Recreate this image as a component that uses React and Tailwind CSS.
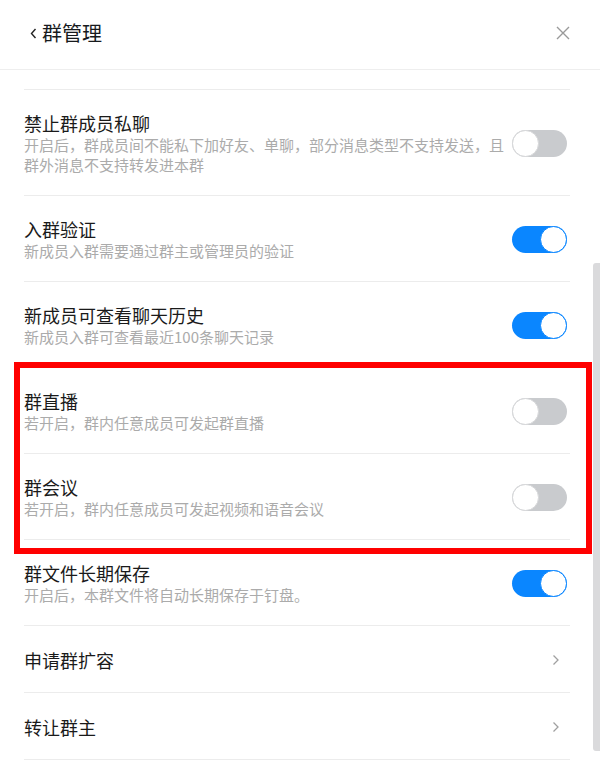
import { useState } from 'react';

const font = { fontFamily: '"Noto Sans CJK SC", "Noto Sans", sans-serif' };

const Toggle = ({ on, onClick }) => (
  <button
    type="button"
    onClick={onClick}
    className={`relative ml-[5px] mr-[3px] h-[27px] w-[55px] shrink-0 rounded-full ${on ? 'bg-[#0a86ff]' : 'bg-[#c9cbce]'}`}
  >
    <span
      className={`absolute top-0 h-[27px] w-[27px] rounded-full bg-white border ${on ? 'right-0 border-[#0a86ff]' : 'left-0 border-[#d6d7d9]'}`}
    ></span>
  </button>
);

const Chevron = () => (
  <svg width="8" height="12" viewBox="0 0 8 12" className="mr-[10px] shrink-0">
    <polyline points="1.5,1.5 6,6 1.5,10.5" fill="none" stroke="#a0a0a0" strokeWidth="1.3" />
  </svg>
);

const SwitchRow = ({ title, desc, on, onClick }) => (
  <div className="flex items-center border-b border-[#ececec] pt-[21px] pb-[20px]">
    <div className="flex-1 min-w-0">
      <div className="text-[18px] leading-[24px] text-[#1a1a1a]">{title}</div>
      <div className="text-[15px] leading-[20px] text-[#ababab]">{desc}</div>
    </div>
    <Toggle on={on} onClick={onClick} />
  </div>
);

const LinkRow = ({ title }) => (
  <div className="flex items-center justify-between border-b border-[#ececec] pt-[22px] pb-[20px]">
    <div className="text-[18px] leading-[24px] text-[#1a1a1a]">{title}</div>
    <Chevron />
  </div>
);

const App = () => {
  const [settings, setSettings] = useState({
    privateChat: false,
    verify: true,
    history: true,
    live: false,
    meeting: false,
    files: true,
  });

  // flip one switch
  const flip = (key) => {
    setSettings({ ...settings, [key]: !settings[key] });
  };

  return (
    <div className="relative h-[760px] w-[600px] overflow-hidden bg-white" style={font}>
      <div className="flex h-[70px] items-center justify-between border-b border-[#eeeeee] pb-[3px] pl-[30px] pr-[30px]">
        <div className="flex items-center">
          <svg width="7" height="11" viewBox="0 0 7 11" className="mr-[5px]">
            <polyline points="5.5,1 1.5,5.5 5.5,10" fill="none" stroke="#222" strokeWidth="1.4" />
          </svg>
          <span className="text-[20px] leading-[28px] text-[#171a1d]">群管理</span>
        </div>
        <svg width="14" height="14" viewBox="0 0 14 14">
          <path d="M1 1 L13 13 M13 1 L1 13" stroke="#9a9a9a" strokeWidth="1.4" />
        </svg>
      </div>

      <div className="ml-[24px] mr-[30px]">
        <div className="h-[20px] border-b border-[#ececec]"></div>
        <SwitchRow
          title="禁止群成员私聊"
          desc="开启后，群成员间不能私下加好友、单聊，部分消息类型不支持发送，且群外消息不支持转发进本群"
          on={settings.privateChat}
          onClick={() => flip('privateChat')}
        />
        <SwitchRow
          title="入群验证"
          desc="新成员入群需要通过群主或管理员的验证"
          on={settings.verify}
          onClick={() => flip('verify')}
        />
        <SwitchRow
          title="新成员可查看聊天历史"
          desc="新成员入群可查看最近100条聊天记录"
          on={settings.history}
          onClick={() => flip('history')}
        />
        <SwitchRow
          title="群直播"
          desc="若开启，群内任意成员可发起群直播"
          on={settings.live}
          onClick={() => flip('live')}
        />
        <SwitchRow
          title="群会议"
          desc="若开启，群内任意成员可发起视频和语音会议"
          on={settings.meeting}
          onClick={() => flip('meeting')}
        />
        <SwitchRow
          title="群文件长期保存"
          desc="开启后，本群文件将自动长期保存于钉盘。"
          on={settings.files}
          onClick={() => flip('files')}
        />
        <LinkRow title="申请群扩容" />
        <LinkRow title="转让群主" />
      </div>

      {/* scrollbar */}
      <div className="absolute right-0 top-[263px] h-[488px] w-[7px] rounded-l-[3px] bg-[#dadadc]"></div>

      {/* highlight box */}
      <div className="pointer-events-none absolute left-[14px] top-[362px] h-[192px] w-[578px] border-[6px] border-[#ff0000]"></div>
    </div>
  );
};

export default App;
